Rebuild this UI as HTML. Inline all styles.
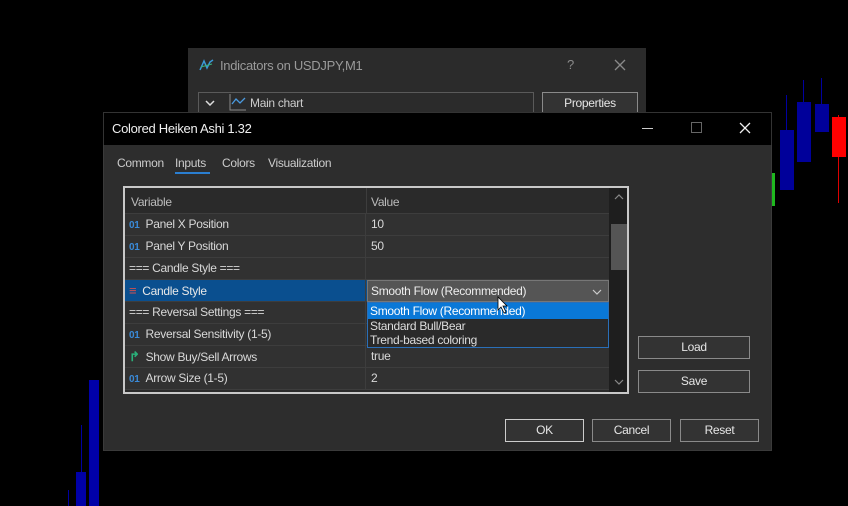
<!DOCTYPE html>
<html><head><meta charset="utf-8"><style>
*{margin:0;padding:0;box-sizing:border-box}
body{width:848px;height:506px;background:#000;position:relative;overflow:hidden;font-family:"Liberation Sans",sans-serif;font-size:12px;color:#ddd;letter-spacing:-0.3px}
.a{position:absolute}
.btn{position:absolute;border:1px solid #8a8a8a;background:#333;color:#e6e6e6;text-align:center;font-size:12px}
.row{position:absolute;left:0;width:486px;height:22px;border-bottom:1px solid #3d3d3d;background:#313131}
.row .v{position:absolute;left:0;width:241px;height:21px;line-height:21px;padding-left:4px;border-right:1px solid #3d3d3d;color:#d8d8d8}
.row .w{position:absolute;left:242px;height:21px;line-height:21px;padding-left:4px;color:#d8d8d8}
.ic{color:#3a8ad8;font-size:10px;font-weight:bold;margin-right:6px}
</style></head><body>
<!-- candles -->
<div class="a" style="left:786px;top:95px;width:1px;height:95px;background:#0000a0"></div>
<div class="a" style="left:780px;top:130px;width:14px;height:60px;background:#00009a"></div>
<div class="a" style="left:803px;top:80px;width:1px;height:30px;background:#0000a0"></div>
<div class="a" style="left:797px;top:102px;width:14px;height:60px;background:#00009a"></div>
<div class="a" style="left:821px;top:78px;width:1px;height:30px;background:#0000a0"></div>
<div class="a" style="left:815px;top:104px;width:14px;height:28px;background:#00009a"></div>
<div class="a" style="left:838px;top:115px;width:1px;height:88px;background:#d00"></div>
<div class="a" style="left:832px;top:117px;width:14px;height:40px;background:#f00"></div>
<div class="a" style="left:772px;top:173px;width:3px;height:33px;background:#1fb81f"></div>
<div class="a" style="left:89px;top:380px;width:10px;height:126px;background:#0000a8"></div>
<div class="a" style="left:81px;top:425px;width:1px;height:50px;background:#0000a0"></div>
<div class="a" style="left:76px;top:472px;width:10px;height:34px;background:#0000a8"></div>
<div class="a" style="left:68px;top:490px;width:1px;height:16px;background:#0000a0"></div>
<!-- back dialog -->
<div class="a" style="left:188px;top:48px;width:458px;height:70px;background:#2b2b2b"></div>
<svg class="a" style="left:199px;top:58px" width="16" height="14"><path d="M1 12 L5 3 L8 10 L11 4 L14 2" stroke="#3a9ad8" stroke-width="1.5" fill="none"/><path d="M2 9 L13 6" stroke="#3ab07a" stroke-width="1" fill="none"/></svg>
<div class="a" style="left:220px;top:58px;color:#9a9a9a;font-size:13px">Indicators on USDJPY,M1</div>
<div class="a" style="left:567px;top:57px;color:#8a8a8a;font-size:13px">?</div>
<svg class="a" style="left:614px;top:59px" width="12" height="12"><path d="M1 1L11 11M11 1L1 11" stroke="#8a8a8a" stroke-width="1.3"/></svg>
<div class="a" style="left:198px;top:92px;width:336px;height:22px;border:1px solid #5a5a5a;background:#2b2b2b"></div>
<svg class="a" style="left:205px;top:100px" width="10" height="6"><path d="M1 1L5 5L9 1" stroke="#ddd" stroke-width="1.5" fill="none"/></svg>
<svg class="a" style="left:229px;top:94px" width="18" height="17"><path d="M1 0V16H17" stroke="#888" fill="none"/><path d="M3 10L7 5L11 9L16 4" stroke="#4a9ae0" stroke-width="1.3" fill="none"/></svg>
<div class="a" style="left:250px;top:96px;color:#ccc">Main chart</div>
<div class="btn" style="left:542px;top:92px;width:96px;height:22px;line-height:20px">Properties</div>
<!-- main dialog -->
<div class="a" style="left:103px;top:112px;width:669px;height:339px;background:#2d2d2d;border:1px solid #3a3a3a"></div>
<div class="a" style="left:103px;top:112px;width:669px;height:33px;background:#000;border:1px solid #333;border-bottom:none"></div>
<div class="a" style="left:112px;top:121px;color:#f0f0f0;font-size:13px">Colored Heiken Ashi 1.32</div>
<div class="a" style="left:642px;top:128px;width:11px;height:1px;background:#ccc"></div>
<div class="a" style="left:691px;top:122px;width:11px;height:11px;border:1px solid #666"></div>
<svg class="a" style="left:739px;top:122px" width="12" height="12"><path d="M1 1L11 11M11 1L1 11" stroke="#eee" stroke-width="1.3"/></svg>
<div class="a" style="left:117px;top:156px;color:#ccc">Common</div>
<div class="a" style="left:175px;top:156px;color:#ccc">Inputs</div>
<div class="a" style="left:175px;top:172px;width:35px;height:2px;background:#2a7ed0"></div>
<div class="a" style="left:222px;top:156px;color:#ccc">Colors</div>
<div class="a" style="left:268px;top:156px;color:#ccc">Visualization</div>
<!-- table -->
<div class="a" style="left:123px;top:186px;width:506px;height:208px;border:2px solid #c8c8c8;background:#2a2a2a;overflow:hidden">
 <div class="a" style="left:0;top:0;width:486px;height:26px;background:#2a2a2a;border-bottom:1px solid #3d3d3d">
  <div class="a" style="left:6px;top:7px;color:#bbb">Variable</div>
  <div class="a" style="left:241px;top:0;width:1px;height:26px;background:#3d3d3d"></div>
  <div class="a" style="left:246px;top:7px;color:#bbb">Value</div>
 </div>
 <div class="row" style="top:26px"><div class="v"><span class="ic">01</span>Panel X Position</div><div class="w">10</div></div>
 <div class="row" style="top:48px"><div class="v"><span class="ic">01</span>Panel Y Position</div><div class="w">50</div></div>
 <div class="row" style="top:70px"><div class="v">=== Candle Style ===</div></div>
 <div class="row" style="top:92px;background:#0a4f8f"><div class="v" style="color:#e8e8e8"><span class="ic" style="color:#d05050;font-size:13px">&#8801;</span>Candle Style</div></div>
 <div class="row" style="top:114px"><div class="v">=== Reversal Settings ===</div></div>
 <div class="row" style="top:136px"><div class="v"><span class="ic">01</span>Reversal Sensitivity (1-5)</div></div>
 <div class="row" style="top:158px"><div class="v"><span class="ic" style="color:#2ab07a;font-size:13px">&#8625;</span>Show Buy/Sell Arrows</div><div class="w">true</div></div>
 <div class="row" style="top:180px"><div class="v"><span class="ic">01</span>Arrow Size (1-5)</div><div class="w">2</div></div>
 <!-- scrollbar -->
 <div class="a" style="left:484px;top:0;width:20px;height:204px;background:#1e1e1e"></div>
 <svg class="a" style="left:489px;top:6px" width="10" height="6"><path d="M1 5L5 1L9 5" stroke="#888" stroke-width="1.2" fill="none"/></svg>
 <div class="a" style="left:486px;top:36px;width:16px;height:46px;background:#555"></div>
 <svg class="a" style="left:489px;top:191px" width="10" height="6"><path d="M1 1L5 5L9 1" stroke="#888" stroke-width="1.2" fill="none"/></svg>
 <!-- combo -->
 <div class="a" style="left:242px;top:92px;width:242px;height:22px;background:#555;border:1px solid #777;color:#eee;line-height:20px;padding-left:3px">Smooth Flow (Recommended)<svg style="position:absolute;right:6px;top:8px" width="10" height="6"><path d="M1 1L5 5L9 1" stroke="#ccc" stroke-width="1.2" fill="none"/></svg></div>
 <div class="a" style="left:242px;top:114px;width:242px;height:46px;background:#2a2a2a;border:1px solid #2a6fb8;color:#ddd;line-height:14px">
  <div style="background:#0a78d7;color:#fff;height:16px;line-height:16px;padding-left:2px">Smooth Flow (Recommended)</div>
  <div style="padding-left:2px">Standard Bull/Bear</div>
  <div style="padding-left:2px">Trend-based coloring</div>
 </div>
</div>
<svg class="a" style="left:497px;top:296px" width="12" height="18"><path d="M1 1L1 14L4 11L7 17L9 16L6 10L10 10Z" fill="#fff" stroke="#000" stroke-width="0.8"/></svg>
<div class="btn" style="left:638px;top:336px;width:112px;height:23px;line-height:21px">Load</div>
<div class="btn" style="left:638px;top:370px;width:112px;height:23px;line-height:21px">Save</div>
<div class="btn" style="left:505px;top:419px;width:79px;height:23px;line-height:21px;border-color:#ccc">OK</div>
<div class="btn" style="left:592px;top:419px;width:79px;height:23px;line-height:21px">Cancel</div>
<div class="btn" style="left:680px;top:419px;width:79px;height:23px;line-height:21px">Reset</div>
</body></html>
